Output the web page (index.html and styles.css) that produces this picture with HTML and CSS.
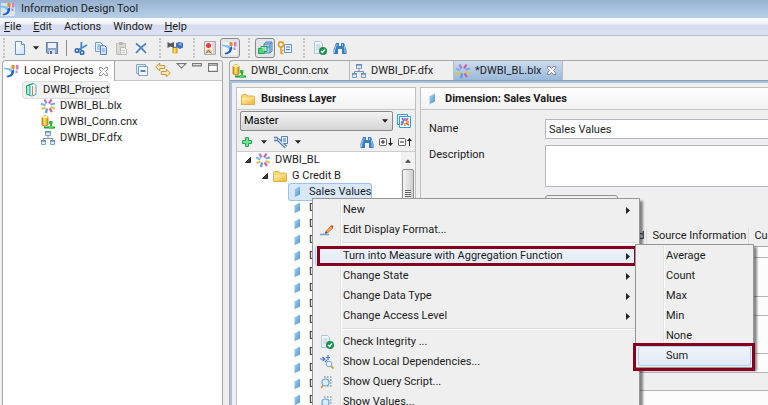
FILE: index.html
```
<!DOCTYPE html>
<html lang="en">
<head>
<meta charset="utf-8">
<title>Information Design Tool</title>
<link rel="stylesheet" href="styles.css">
</head>
<body>
<svg class="defs" aria-hidden="true">
  <defs>
    <linearGradient id="gFolder" x1="0" y1="0" x2="1" y2="1"><stop offset="0" stop-color="#fff3b8"/><stop offset="1" stop-color="#f2b52c"/></linearGradient>
    <linearGradient id="gDim" x1="0" y1="0" x2="1" y2="1"><stop offset="0" stop-color="#b5dbf6"/><stop offset="1" stop-color="#4a8fc8"/></linearGradient>
    <linearGradient id="gGold" x1="0" x2="1"><stop offset="0" stop-color="#c98f10"/><stop offset=".45" stop-color="#ffe46a"/><stop offset="1" stop-color="#c98f10"/></linearGradient>
    <linearGradient id="gPage" x1="0" y1="0" x2="1" y2="1"><stop offset="0" stop-color="#ffffff"/><stop offset="1" stop-color="#cfe2f6"/></linearGradient>
  </defs>
  <symbol id="i-app" viewBox="0 0 16 16"><path d="M1 2h14v13H1z" fill="#fff" fill-opacity=".55"/><path d="M0 4.500L7 5.500 9 8 8 9.500Q5 6.500 0 6z" fill="#7cc0f0"/><path d="M10 6Q11.500 13 3.500 14.500L2.500 13Q8 12 7.500 8z" fill="#1f5fd8"/><path d="M7.500 2h3v4h-3z" fill="#f0862d"/><path d="M12 2h2.500v4.500H12z" fill="#d17fb4"/><path d="M11.500 7.500h2V10h-2z" fill="#a78fd0"/></symbol>
  <symbol id="i-page" viewBox="0 0 16 16"><path d="M3.500 1.500h6l3 3v10h-9z" fill="url(#gPage)" stroke="#5f93cc"/><path d="M9.500 1.500v3h3" fill="#fff" stroke="#5f93cc"/></symbol>
  <symbol id="i-save" viewBox="0 0 16 16"><path d="M2.500 2.500h11v11h-10l-1-1z" fill="#8fa5ca" stroke="#6079a8"/><path d="M4 3h8v5H4z" fill="#eef2f8"/><path d="M5 10h6v4H5z" fill="#d5deec"/><path d="M6 11h2v3H6z" fill="#4d6898"/></symbol>
  <symbol id="i-cut" viewBox="0 0 16 16"><path d="M8.500 2L8 10M14 5L5 10" stroke="#4b88c8" stroke-width="1.800" fill="none"/><circle cx="4" cy="10.500" r="1.800" fill="none" stroke="#2c66ad" stroke-width="1.500"/><circle cx="9" cy="12.500" r="1.800" fill="none" stroke="#2c66ad" stroke-width="1.500"/></symbol>
  <symbol id="i-copy" viewBox="0 0 16 16"><path d="M2.500 2.500h5l2 2v7h-7z" fill="#e6f1fb" stroke="#6d9dcd"/><path d="M7.500 5.500h4l2 2v7h-6z" fill="#d3e5f6" stroke="#5087c0"/><path d="M9 9h3M9 11h3M4 5h3M4 7h3M4 9h3" stroke="#6d9dcd"/></symbol>
  <symbol id="i-paste" viewBox="0 0 16 16"><path d="M3.500 3.500h9v11h-9z" fill="#dcd9d4" stroke="#c1bdb7"/><path d="M6 2h4v3H6z" fill="#bdb8b0"/><path d="M7.500 7.500h4l2 2v5h-6z" fill="#f5f5f5" stroke="#b9b9b9"/><path d="M9 10.500h3M9 12.500h3" stroke="#c5c5c5"/></symbol>
  <symbol id="i-x" viewBox="0 0 16 16"><path d="M3 3.500Q8 7 13 13M13 3.500Q8 7 3 13" stroke="#4a80be" stroke-width="1.700" fill="none"/></symbol>
  <symbol id="i-merge" viewBox="0 0 16 16"><path d="M4 5l4 3 4-3" stroke="#777" stroke-width="1.500" fill="none"/><path d="M.5 2l3 1.500L7 2v6L3.500 6.500.5 8z" fill="#595959"/><path d="M9 3l3.500-1L16 3v4.500l-3 1.500-4-2z" fill="#3f6fbd"/><path d="M10.500 4l4-1v3z" fill="#8db4ea"/><path d="M5.500 8h5v5q-2.500 2-5 0z" fill="url(#gGold)"/></symbol>
  <symbol id="i-person" viewBox="0 0 16 16"><path d="M2.500 1.500h11v13h-11z" fill="#f6efe8" stroke="#a9a9a9"/><path d="M10.500 2h2.500v12h-2.500z" fill="#d5d3e0"/><circle cx="6.500" cy="5.500" r="2.500" fill="#e23c3c"/><path d="M3.500 13q0-4 3.200-4t3.300 4z" fill="#eebd78"/><path d="M4 13.500l2.500-3 2.500 3" fill="none" stroke="#666"/></symbol>
  <symbol id="i-boxes" viewBox="0 0 16 16"><path d="M7 4l2-2h6v9l-2 2H7z" fill="#a8cdee" stroke="#4f86bd"/><path d="M7 4h6v8.500M13 4l2-2M7 7h6" fill="none" stroke="#4f86bd"/><path d="M1.500 8.500h6v5h-6z" fill="#53d17b" stroke="#18a850"/><path d="M4 8V6.500h6v5H8" fill="#d5f5e0" fill-opacity=".6" stroke="#18a850"/></symbol>
  <symbol id="i-keys" viewBox="0 0 16 16"><path d="M7.500 4.500h7v8h-7z" fill="#e9f2fb" stroke="#6d95c4"/><path d="M9 7h4M9 9.500h4" stroke="#4f7db8"/><circle cx="4" cy="4.500" r="2.500" fill="#fff" stroke="#e0a23a" stroke-width="1.800"/><path d="M4 7v7M4 10.500h2.500M4 13.500h2.500" stroke="#e0a23a" stroke-width="1.600"/></symbol>
  <symbol id="i-check" viewBox="0 0 16 16"><path d="M2.500 1.500h6l2 2v10h-8z" fill="url(#gPage)" stroke="#b0c6da"/><path d="M4 5h4M4 7h4M4 9h3" stroke="#b5cade"/><circle cx="11" cy="11" r="4" fill="#18914a"/><path d="M9 11l1.500 1.500L13 9.500" fill="none" stroke="#fff" stroke-width="1.500"/></symbol>
  <symbol id="i-find" viewBox="0 0 16 16"><path d="M4 3h3v3h2V3h3l2.500 7v4h-4.500V9H6v5H1.500v-4z" fill="#3b7cc0"/><path d="M4 6L2.500 11v2M12.500 6l.5 4v3M5 4v2M10.500 4v2" stroke="#a5d0f2" fill="none"/></symbol>
  <symbol id="i-close" viewBox="0 0 12 12"><path d="M1.500 1.500h2.500L6 4l2-2.500h2.500v2L8 6l2.500 2.500v2H8L6 8l-2 2.500H1.500v-2L4 6 1.500 3.500z" fill="#fff" stroke="#808080"/></symbol>
  <symbol id="i-collapse" viewBox="0 0 16 16"><path d="M2.500 2.500h9v9h-9z" fill="#dce9f6" stroke="#88a8cc"/><path d="M4.500 4.500h9v9h-9z" fill="#f2f8ff" stroke="#7d9fca"/><path d="M6.500 9h5" stroke="#285a9e" stroke-width="1.500"/></symbol>
  <symbol id="i-link" viewBox="0 0 16 16"><path d="M.7 5l4-4v2.500h5v3h-5V9z" fill="#fde9b3" stroke="#cc943a"/><path d="M15.300 11l-4-4v2.500h-5v3h5V15z" fill="#fde9b3" stroke="#cc943a"/></symbol>
  <symbol id="i-project" viewBox="0 0 16 16"><path d="M3.500 4L7 2.500v11L3.500 12z" fill="#a8ead0" stroke="#18a86c"/><path d="M7 2.500l4-1 2 2v9l-4 1.500-2-.5z" fill="#eaf4fc" stroke="#4faac3"/><path d="M9.500 4v9.500" stroke="#df8439" fill="none"/><path d="M3.500 4L10 1.500" stroke="#18a86c"/></symbol>
  <symbol id="i-star" viewBox="0 0 16 16"><g stroke-width="2.200"><path d="M6.500 5.500L4.500 1.500" stroke="#b877c8"/><path d="M9 5.500L11.500 1.500" stroke="#d656b8"/><path d="M10.500 6.500L15 5.500" stroke="#6fb0dc"/><path d="M5.500 7.500L1 5.500" stroke="#7cb8de"/><path d="M5.500 9.500L1.500 11" stroke="#e3c24a"/><path d="M10.500 9l4.500 1.500" stroke="#e3c24a"/><path d="M9.500 10.500l2.500 3.500" stroke="#c95fc4"/><path d="M7 10.500L6 15" stroke="#5a9bd2"/></g></symbol>
  <symbol id="i-conn" viewBox="0 0 16 16"><path d="M2 3v8q3 2 6 0V3q-3-3-6 0z" fill="url(#gGold)" stroke="#b88216" stroke-width=".8"/><ellipse cx="5" cy="3" rx="3" ry="1.300" fill="#fff0a0"/><path d="M9 7h3.500v3H9z" fill="#37b844"/><path d="M11 9v4M4 13.500h11" stroke="#22a634" stroke-width="1.800"/><path d="M9 12h4v3H9z" fill="#4fd25b"/></symbol>
  <symbol id="i-df" viewBox="0 0 16 16"><path d="M8 6v3M3.500 11V8.500h9V11" fill="none" stroke="#7c8fa8"/><path d="M5.500 1.500h5v4h-5zM1.500 10.500h4v4h-4zM10.500 10.500h4v4h-4z" fill="#dceafa" stroke="#7ba0d0"/><path d="M5 2h6M1 11h5M10 11h5" stroke="#4a79b8" stroke-width="1.200"/></symbol>
  <symbol id="i-folder" viewBox="0 0 16 16"><path d="M1.500 4.500l1-1h4l1 1.500h6l1 1v7.500h-13z" fill="#f8d978" stroke="#dbb052"/><path d="M2 7h12v6H2z" fill="url(#gFolder)"/></symbol>
  <symbol id="i-dim" viewBox="0 0 16 16"><path d="M5 5.500L11 2.500v8L5 13.500z" fill="url(#gDim)"/><path d="M5.500 5.500v8" stroke="#c6e2f7"/></symbol>
  <symbol id="i-views" viewBox="0 0 16 16"><path d="M1.500 1.500h10v10h-10z" fill="#e9f8fe" stroke="#29a4dc"/><path d="M3.500 3.500h11v11h-11z" fill="#fff" stroke="#29a4dc"/><g stroke-width="1.800"><path d="M6 5l2 3M5 12l2-2" stroke="#b54fc0"/><path d="M12 5l-2 3M13 12l-3-2" stroke="#df4f83"/><path d="M9 5v3M5 9h3" stroke="#549bd2"/><path d="M9 13v-3M10 9h3" stroke="#e7ab2e"/></g></symbol>
  <symbol id="i-plus" viewBox="0 0 16 16"><path d="M6.500 3.500h3v3h3v3h-3v3h-3v-3h-3v-3h3z" fill="#6fe092" stroke="#25a35a"/></symbol>
  <symbol id="i-tools" viewBox="0 0 16 16"><path d="M1 3.500h3l1 1.500-1 1.500H1" fill="none" stroke="#5580bd" stroke-width="1.300"/><path d="M5 5.500l8 7.500" stroke="#4672b3" stroke-width="3.500"/><path d="M8.500 2.500h6v7h-6z" fill="#e6effa" stroke="#5580bd"/><path d="M10 5h3M10 7h3" stroke="#4672b3"/><path d="M5 5.500l8 7.500" stroke="#cfe0f5" stroke-width="1.300"/></symbol>
  <symbol id="i-expand" viewBox="0 0 16 16"><rect x="1.500" y="4.500" width="7" height="7" rx="1" fill="#fff" stroke="#666"/><path d="M3 8h4M5 6v4M12.500 4v6" stroke="#222"/><path d="M10 9h5l-2.500 3z" fill="#222"/></symbol>
  <symbol id="i-shrink" viewBox="0 0 16 16"><rect x="1.500" y="4.500" width="7" height="7" rx="1" fill="#fff" stroke="#666"/><path d="M3 8h4M12.500 6v6" stroke="#222"/><path d="M10 7h5l-2.500-3z" fill="#222"/></symbol>
  <symbol id="i-edit" viewBox="0 0 16 16"><path d="M1 12.500h9" stroke="#62a6dc" stroke-width="1.500"/><path d="M6 11.500l1-2.500 5-5 2 2-5 4.500z" fill="#f2a440" stroke="#a96523" stroke-width=".6"/><path d="M11.500 4L13 3l1.500 1.500L13.500 6z" fill="#d94a3e"/><path d="M6 11.500l1-2 1.500 1z" fill="#444"/></symbol>
  <symbol id="i-deps" viewBox="0 0 16 16"><path d="M1 5h5M3.500 3L6 5 3.500 7M9 1v5M7 3.500h4M6 8l2-2" stroke="#4b78d0" stroke-width="1.200" fill="none"/><path d="M12 12l2.500 2.500" stroke="#d79a3a" stroke-width="1.800"/><circle cx="10" cy="10" r="2.800" fill="#e4f3fd" stroke="#7aa9d6"/></symbol>
  <symbol id="i-query" viewBox="0 0 16 16"><path d="M5 3h9M5 6h9M5 9h9M8 12h6" stroke="#8aa3c0" stroke-width="1.600" stroke-dasharray="1.600 1.400"/><circle cx="6.500" cy="8.500" r="3.500" fill="#d9effc" stroke="#6aa6d8" stroke-width="1.200"/><path d="M4 11.500L2 14" stroke="#d79a3a" stroke-width="1.800"/></symbol>
  <symbol id="i-caret" viewBox="0 0 7 4"><path d="M0 0h7L3.500 4z" fill="#222"/></symbol>
  <symbol id="i-arrow" viewBox="0 0 4 7"><path d="M0 0l4 3.500L0 7z" fill="#222"/></symbol>
  <symbol id="i-open" viewBox="0 0 6 6"><path d="M5.500.5v5h-5z" fill="#444" stroke="#222"/></symbol>
</svg>

<header class="titlebar"><svg class="ic"><use href="#i-app"/></svg><h1>Information Design Tool</h1></header>
<nav class="menubar">
  <a href="#"><u>F</u>ile</a><a href="#"><u>E</u>dit</a><a href="#">Actions</a><a href="#">Window</a><a href="#"><u>H</u>elp</a>
</nav>
<div class="toolbar">
  <div class="tgroup first">
    <button aria-label="New"><svg class="ic"><use href="#i-page"/></svg></button>
    <button class="drop" aria-label="New options"><svg class="caret"><use href="#i-caret"/></svg></button>
    <button aria-label="Save"><svg class="ic"><use href="#i-save"/></svg></button>
    <span class="vline"></span>
    <button aria-label="Cut"><svg class="ic"><use href="#i-cut"/></svg></button>
    <button aria-label="Copy"><svg class="ic"><use href="#i-copy"/></svg></button>
    <button aria-label="Paste"><svg class="ic"><use href="#i-paste"/></svg></button>
    <button aria-label="Delete"><svg class="ic"><use href="#i-x"/></svg></button>
  </div>
  <div class="tgroup tight"><button aria-label="Federate"><svg class="ic"><use href="#i-merge"/></svg></button></div>
  <div class="tgroup">
    <button aria-label="Security"><svg class="ic"><use href="#i-person"/></svg></button>
    <button class="on" aria-label="Local projects"><svg class="ic"><use href="#i-app"/></svg></button>
  </div>
  <div class="tgroup">
    <button class="on" aria-label="Resources"><svg class="ic"><use href="#i-boxes"/></svg></button>
    <button aria-label="Keys"><svg class="ic"><use href="#i-keys"/></svg></button>
  </div>
  <div class="tgroup">
    <button aria-label="Check integrity"><svg class="ic"><use href="#i-check"/></svg></button>
    <button aria-label="Find"><svg class="ic"><use href="#i-find"/></svg></button>
  </div>
</div>

<main class="work">
  <section class="projects">
    <div class="viewbar">
      <div class="viewtab"><svg class="ic"><use href="#i-app"/></svg><span>Local Projects</span><svg class="close"><use href="#i-close"/></svg></div>
      <div class="viewtools">
        <button aria-label="Collapse all"><svg class="ic"><use href="#i-collapse"/></svg></button>
        <button aria-label="Link"><svg class="ic"><use href="#i-link"/></svg></button>
        <button aria-label="View menu"><svg class="wic" viewBox="0 0 10 10"><path d="M1 1.500h8L5 5.500z" fill="#fff" stroke="#777"/></svg></button>
        <button aria-label="Minimize"><svg class="wic" viewBox="0 0 10 10"><path d="M.5 1.500h8v2h-8z" fill="#fff" stroke="#777"/></svg></button>
        <button aria-label="Maximize"><svg class="wic" viewBox="0 0 10 10"><path d="M.5 1.500h8v7h-8zM.5 3h8" fill="#fff" stroke="#777"/></svg></button>
      </div>
    </div>
    <ul class="tree">
      <li><span class="node picked"><svg class="ic"><use href="#i-project"/></svg>DWBI_Project</span>
        <ul>
          <li><span class="node"><svg class="ic"><use href="#i-star"/></svg>DWBI_BL.blx</span></li>
          <li><span class="node"><svg class="ic"><use href="#i-conn"/></svg>DWBI_Conn.cnx</span></li>
          <li><span class="node"><svg class="ic"><use href="#i-df"/></svg>DWBI_DF.dfx</span></li>
        </ul>
      </li>
    </ul>
  </section>

  <section class="editor">
    <div class="tabs">
      <div class="tab t1"><svg class="ic"><use href="#i-conn"/></svg>DWBI_Conn.cnx</div>
      <div class="tab t2"><svg class="ic"><use href="#i-df"/></svg>DWBI_DF.dfx</div>
      <div class="tab active"><svg class="ic"><use href="#i-star"/></svg>*DWBI_BL.blx<svg class="close"><use href="#i-close"/></svg></div>
    </div>
    <div class="panes">
      <section class="pane layer">
        <h2><svg class="ic"><use href="#i-folder"/></svg>Business Layer</h2>
        <div class="pick">
          <select aria-label="View"><option>Master</option></select>
          <svg class="caret"><use href="#i-caret"/></svg>
          <button aria-label="Manage views"><svg class="ic"><use href="#i-views"/></svg></button>
        </div>
        <div class="tools">
          <button aria-label="Insert"><svg class="ic"><use href="#i-plus"/></svg></button>
          <button class="drop" aria-label="Insert options"><svg class="caret"><use href="#i-caret"/></svg></button>
          <button aria-label="Tools"><svg class="ic"><use href="#i-tools"/></svg></button>
          <button class="drop" aria-label="Tool options"><svg class="caret"><use href="#i-caret"/></svg></button>
          <span class="fill"></span>
          <button aria-label="Find"><svg class="ic"><use href="#i-find"/></svg></button>
          <button aria-label="Expand all"><svg class="ic"><use href="#i-expand"/></svg></button>
          <button aria-label="Collapse all"><svg class="ic"><use href="#i-shrink"/></svg></button>
        </div>
        <div class="treebox">
          <ul class="btree">
            <li><span class="node"><svg class="open"><use href="#i-open"/></svg><svg class="ic"><use href="#i-star"/></svg>DWBI_BL</span>
              <ul><li><span class="node"><svg class="open"><use href="#i-open"/></svg><svg class="ic"><use href="#i-folder"/></svg>G Credit B</span>
                <ul>
                  <li><span class="node chosen"><svg class="ic"><use href="#i-dim"/></svg>Sales Values</span></li>
                  <li><span class="node"><svg class="ic"><use href="#i-dim"/></svg>D</span></li>
                  <li><span class="node"><svg class="ic"><use href="#i-dim"/></svg>D</span></li>
                  <li><span class="node"><svg class="ic"><use href="#i-dim"/></svg>D</span></li>
                  <li><span class="node"><svg class="ic"><use href="#i-dim"/></svg>D</span></li>
                  <li><span class="node"><svg class="ic"><use href="#i-dim"/></svg>D</span></li>
                  <li><span class="node"><svg class="ic"><use href="#i-dim"/></svg>D</span></li>
                  <li><span class="node"><svg class="ic"><use href="#i-dim"/></svg>D</span></li>
                  <li><span class="node"><svg class="ic"><use href="#i-dim"/></svg>D</span></li>
                  <li><span class="node"><svg class="ic"><use href="#i-dim"/></svg>D</span></li>
                  <li><span class="node"><svg class="ic"><use href="#i-dim"/></svg>D</span></li>
                  <li><span class="node"><svg class="ic"><use href="#i-dim"/></svg>D</span></li>
                  <li><span class="node"><svg class="ic"><use href="#i-dim"/></svg>D</span></li>
                  <li><span class="node"><svg class="ic"><use href="#i-dim"/></svg>D</span></li>
                </ul></li></ul></li>
          </ul>
          <div class="scroll"><svg class="up" viewBox="0 0 7 4"><path d="M0 4h7L3.500 0z" fill="#444"/></svg><div class="thumb"><i></i></div></div>
        </div>
      </section>
      <section class="pane detail">
        <h2><svg class="ic"><use href="#i-dim"/></svg>Dimension: Sales Values</h2>
        <form class="form">
          <label for="name">Name</label><input id="name" value="Sales Values">
          <label for="desc">Description</label><textarea id="desc"></textarea>
          <span></span><button type="button" class="state" aria-label="State"></button>
        </form>
        <div class="subtabs"><span>Advanced</span><span>Source Information</span><span>Cus</span></div>
        <div class="sheet"><div class="band b1"></div><div class="band b2"></div><div class="band b3"></div><div class="band b4"></div><div class="band b5"></div></div>
        <div class="footerband"></div>
        <div class="below"></div>
      </section>
    </div>
  </section>
</main>

<div class="menu context" role="menu">
  <button role="menuitem"><span class="gut"></span>New<svg class="arrow"><use href="#i-arrow"/></svg></button>
  <button role="menuitem"><span class="gut"><svg class="ic"><use href="#i-edit"/></svg></span>Edit Display Format...</button>
  <hr>
  <button role="menuitem" class="hot marked"><span class="gut"></span>Turn into Measure with Aggregation Function<svg class="arrow"><use href="#i-arrow"/></svg></button>
  <button role="menuitem"><span class="gut"></span>Change State<svg class="arrow"><use href="#i-arrow"/></svg></button>
  <button role="menuitem"><span class="gut"></span>Change Data Type<svg class="arrow"><use href="#i-arrow"/></svg></button>
  <button role="menuitem"><span class="gut"></span>Change Access Level<svg class="arrow"><use href="#i-arrow"/></svg></button>
  <hr>
  <button role="menuitem"><span class="gut"><svg class="ic"><use href="#i-check"/></svg></span>Check Integrity ...</button>
  <button role="menuitem"><span class="gut"><svg class="ic"><use href="#i-deps"/></svg></span>Show Local Dependencies...</button>
  <button role="menuitem"><span class="gut"><svg class="ic"><use href="#i-query"/></svg></span>Show Query Script...</button>
  <button role="menuitem"><span class="gut"><svg class="ic"><use href="#i-query"/></svg></span>Show Values...</button>
</div>
<div class="menu sub" role="menu">
  <button role="menuitem"><span class="gut"></span>Average</button>
  <button role="menuitem"><span class="gut"></span>Count</button>
  <button role="menuitem"><span class="gut"></span>Max</button>
  <button role="menuitem"><span class="gut"></span>Min</button>
  <button role="menuitem"><span class="gut"></span>None</button>
  <button role="menuitem" class="hot marked"><span class="gut"></span>Sum</button>
</div>
</body>
</html>
```
FILE: styles.css
```
:root {
  --face: #efefef;
  --line: #a8a8a8;
  --mark: #86001f;
}
* { box-sizing: border-box; }
body {
  margin: 0;
  height: 100vh;
  display: flex;
  flex-direction: column;
  overflow: hidden;
  position: relative;
  background: var(--face);
  color: #1c1c1c;
  font: 11px/16px Roboto, sans-serif;
}
button { font: inherit; color: inherit; background: none; border: 0; padding: 0; }
ul { list-style: none; margin: 0; padding: 0; }
h1, h2 { margin: 0; font-size: 11px; }
svg { flex: none; display: block; }
.defs { position: absolute; width: 0; height: 0; }
.ic { width: 16px; height: 16px; }
.caret { width: 6px; height: 4px; }
.close { width: 11px; height: 11px; }

.titlebar {
  flex: none;
  height: 18px;
  display: flex;
  align-items: center;
  gap: 5px;
  background: linear-gradient(#98b3d1, #b7cfe8);
}
.titlebar h1 { font-weight: 400; }
.menubar {
  flex: none;
  height: 18px;
  display: flex;
  align-items: center;
  gap: 12px;
  padding: 0 4px;
  background: linear-gradient(#fbfcfe 0, #eef1f8 6px, #d5dcee 7px, #dde2f2);
  border-bottom: 1px solid #b8bfd4;
}
.menubar a { color: inherit; text-decoration: none; }

.toolbar { flex: none; height: 24px; display: flex; align-items: center; padding: 0 3px; }
.toolbar button { width: 20px; height: 20px; display: flex; align-items: center; justify-content: center; border-radius: 3px; }
.toolbar .drop { width: 12px; }
.toolbar .on { border: 1px solid #8a8a8a; background: #e2e4e8; }
.tgroup { display: flex; align-items: center; padding: 0 8px 0 5px; border-left: 2px dotted #c4c4c4; }
.tgroup.tight { padding-left: 4px; }
.vline { width: 1px; height: 16px; background: #8d8d8d; margin: 0 4px; }

.work { flex: 1; min-height: 0; display: flex; gap: 6px; padding-left: 2px; }
.projects {
  flex: 0 0 221px;
  display: flex;
  flex-direction: column;
  background: #fff;
  border: 1px solid var(--line);
  border-bottom: 0;
  border-radius: 4px 4px 0 0;
  overflow: hidden;
}
.viewbar { display: flex; height: 20px; }
.viewtab { display: flex; align-items: center; gap: 4px; padding: 0 5px 0 1px; border-right: 1px solid var(--line); }
.viewtools { flex: 1; display: flex; align-items: flex-start; justify-content: flex-end; gap: 5px; padding: 1px 3px 0 0; background: var(--face); border-bottom: 1px solid #c4c4c4; }
.wic { width: 11px; height: 11px; }
.tree { padding: 1px 0 0 20px; }
.tree ul { padding-left: 17px; }
.node { display: inline-flex; align-items: center; height: 16px; gap: 4px; vertical-align: top; white-space: nowrap; }
.tree li, .btree li { line-height: 16px; }
.picked { background: #f2f2f2; box-shadow: 0 0 0 1px #ddd; border-radius: 3px; }

.editor { flex: 1; min-width: 0; display: flex; flex-direction: column; border: 1px solid var(--line); border-width: 1px 0 0 1px; border-radius: 4px 0 0 0; }
.tabs { flex: none; display: flex; height: 20px; border-bottom: 1px solid #8f9eae; }
.tab { display: flex; align-items: center; gap: 4px; padding: 0 5px 0 1px; border-right: 1px solid #bbb; }
.t1 { width: 120px; }
.t2 { width: 104px; }
.tab.active { background: linear-gradient(#cbdcee, #9bb9da); }
.panes { flex: 1; min-height: 0; display: flex; gap: 4px; padding: 4px 0 0 4px; border: 2px solid #a8c3e0; border-width: 2px 0 0 2px; }
.pane { border: 1px solid #c0c0c0; border-bottom: 0; display: flex; flex-direction: column; min-width: 0; }
.layer { flex: 0 0 180px; }
.detail { flex: 1; border-right: 0; }
.pane h2 { flex: none; height: 22px; display: flex; align-items: center; gap: 5px; padding-left: 3px; background: linear-gradient(#fefefe, #f2f2f2); border-bottom: 1px solid #c8c8c8; }
.pick { display: flex; align-items: center; gap: 3px; padding: 0 3px; height: 22px; position: relative; }
.pick select { appearance: none; flex: 1; height: 20px; padding: 0 3px; font: inherit; border: 1px solid #8a8a8a; border-radius: 2px; background: linear-gradient(#f2f2f2, #d6d6d6); }
.pick .caret { position: absolute; right: 27px; top: 9px; }
.tools { display: flex; align-items: center; height: 19px; padding: 0 2px; gap: 3px; }
.tools .drop { width: 12px; display: flex; justify-content: center; }
.fill { flex: 1; }
.treebox { flex: 1; min-height: 0; display: flex; background: #fff; border-top: 1px solid #ccc; overflow: hidden; }
.btree { flex: 1; min-width: 0; overflow: hidden; padding-left: 8px; }
.btree ul { padding-left: 17px; }
.btree ul ul { padding-left: 27px; }
.open { width: 6px; height: 6px; }
.chosen { background: #d9e8f8; box-shadow: 0 0 0 1px #9dc1e8; border-radius: 2px; }
.scroll { width: 14px; background: #f2f2f2; display: flex; flex-direction: column; align-items: center; gap: 6px; padding-top: 7px; }
.up { width: 6px; height: 4px; }
.thumb { width: 12px; flex: 0 0 50px; border: 1px solid #8f8f8f; border-radius: 2px; background: linear-gradient(90deg, #f4f4f4, #cfcfcf); padding: 20px 2px; }
.thumb i { display: block; height: 8px; background: repeating-linear-gradient(#666 0 1px, #eee 1px 2px); }

.form { display: grid; grid-template-columns: 108px 1fr; gap: 6px 8px; padding: 9px 0 0 8px; }
.form label { padding-top: 2px; }
.form input, .form textarea { font: inherit; color: inherit; width: 100%; border: 1px solid #b4b7bd; border-right: 0; background: #fff; padding: 0 3px; resize: none; display: block; }
.form input { height: 20px; }
.form textarea { height: 42px; }
.state { width: 73px; height: 20px; margin-top: 2px; border: 1px solid #909090; border-radius: 3px; }
.subtabs { display: flex; height: 18px; margin-top: 13px; padding-left: 175px; gap: 5px; white-space: nowrap; overflow: hidden; }
.subtabs span { padding-right: 2px; border-right: 1px solid #ddd; }
.subtabs span:last-child { border-right: 0; }
.sheet { background: #fcfcfc; border-top: 1px solid #aaa; }
.band { border-bottom: 1px solid #b4b4b4; }
.b1 { height: 11px; }
.b2 { height: 39px; }
.b3 { height: 19px; }
.b4 { height: 38px; }
.b5 { height: 19px; }
.footerband { height: 18px; border-bottom: 1px solid #b4b4b4; }
.below { flex: 1; background: #fcfcfc; }

.menu { position: absolute; background: var(--face); border: 1px solid #979797; padding: 1px 2px; box-shadow: 3px 3px 2px rgba(0, 0, 0, .45); }
.menu::before { content: ""; position: absolute; left: 27px; top: 1px; bottom: 1px; border-left: 1px solid #e2e2e2; border-right: 1px solid #fff; }
.menu button { display: flex; align-items: center; width: 100%; height: 20px; text-align: left; white-space: nowrap; position: relative; border-radius: 3px; }
.menu hr { height: 2px; margin: 2px 0 2px 25px; border: 0; border-top: 1px solid #dcdcdc; background: #fff; }
.gut { width: 28px; display: flex; padding-left: 4px; }
.arrow { width: 4px; height: 7px; margin-left: auto; margin-right: 7px; }
.menu .hot { background: linear-gradient(#f0f4f9, #e2eaf5); box-shadow: inset 0 0 0 1px #aecff7; }
.marked::after { content: ""; position: absolute; inset: 0 0 0 2px; border: 3px solid var(--mark); }
.context { left: 312px; top: 198px; width: 328px; }
.sub { left: 635px; top: 244px; width: 119px; }
.sub .marked::after { inset: -3px -4px -5px -5px; }
```
